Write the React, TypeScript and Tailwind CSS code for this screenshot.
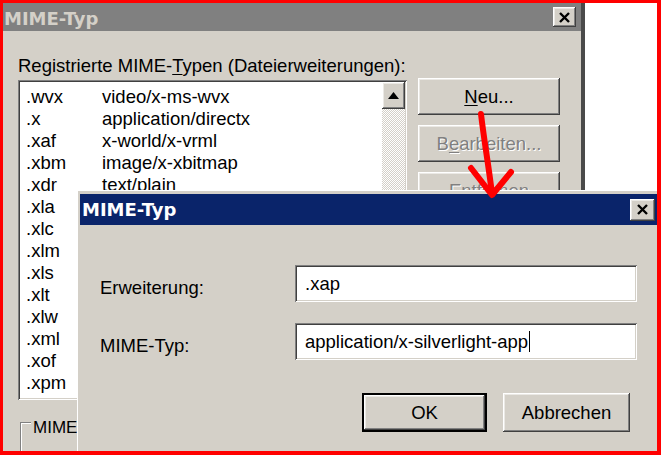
import React from "react";

const raised =
  "shadow-[inset_-1px_-1px_0_#404040,inset_1px_1px_0_#fff,inset_-2px_-2px_0_#808080,inset_2px_2px_0_#ebe9e5]";
const sunken =
  "shadow-[inset_1px_1px_0_#808080,inset_-1px_-1px_0_#fff,inset_2px_2px_0_#404040,inset_-2px_-2px_0_#d4d0c8]";

function XIcon() {
  return (
    <svg width="13" height="11" viewBox="0 0 13 11">
      <path d="M2 1 L11 10 M11 1 L2 10" stroke="#000" strokeWidth="2.4" fill="none" />
    </svg>
  );
}

const rows: [string, string][] = [
  [".wvx", "video/x-ms-wvx"],
  [".x", "application/directx"],
  [".xaf", "x-world/x-vrml"],
  [".xbm", "image/x-xbitmap"],
  [".xdr", "text/plain"],
  [".xla", ""],
  [".xlc", ""],
  [".xlm", ""],
  [".xls", ""],
  [".xlt", ""],
  [".xlw", ""],
  [".xml", ""],
  [".xof", ""],
  [".xpm", ""],
];

export default function App() {
  return (
    <div className="relative w-[661px] h-[455px] overflow-hidden bg-white font-['Liberation_Sans',Arial,sans-serif] text-[18.5px] text-black">
      {/* Background window */}
      <div className="absolute left-0 top-0 w-[585px] h-[455px] flex flex-col bg-[#d4d0c8] border-r-[4px] border-[#4a4a4a]">
        <div className="h-[31px] shrink-0 flex items-start justify-between bg-[#808080] pl-[4px] pr-[5px]">
          <span className="mt-[8px] leading-[21px] font-['DejaVu_Sans',sans-serif] font-bold text-[18px] text-[#d4d0c8]">
            MIME-Typ
          </span>
          <div className={`mt-[7px] w-[23px] h-[20px] flex items-center justify-center bg-[#d4d0c8] ${raised}`}>
            <XIcon />
          </div>
        </div>
        <div className="flex flex-col pl-[18px] pt-[24px]">
          <div className="leading-[22px] whitespace-nowrap">
            Registrierte MIME-<span className="underline underline-offset-2">T</span>ypen (Dateierweiterungen):
          </div>
          <div className="flex items-start mt-[1px]">
            <div className={`mt-[2px] w-[389px] h-[320px] p-[2px] flex bg-white ${sunken}`}>
              <div className="flex-1 overflow-hidden pt-[4px] pl-[6px] leading-[22px]">
                {rows.map(([ext, mime]) => (
                  <div key={ext} className="flex whitespace-nowrap">
                    <span className="w-[76px] shrink-0">{ext}</span>
                    <span>{mime}</span>
                  </div>
                ))}
              </div>
              <div className="w-[23px] flex flex-col">
                <div className={`h-[27px] shrink-0 flex items-center justify-center bg-[#d4d0c8] ${raised}`}>
                  <svg width="11" height="7" viewBox="0 0 11 7">
                    <path d="M5.5 0 L11 7 L0 7 Z" fill="#000" />
                  </svg>
                </div>
                <div className="flex-1 bg-[image:repeating-conic-gradient(#ffffff_0_25%,#d4d0c8_0_50%)] bg-[length:2px_2px]" />
              </div>
            </div>
            <div className="ml-[11px] w-[142px] flex flex-col gap-[10px]">
              <div className={`h-[37px] flex items-center justify-center bg-[#d4d0c8] ${raised}`}>
                <span>
                  <span className="underline underline-offset-2">N</span>eu...
                </span>
              </div>
              <div className={`h-[37px] flex items-center justify-center bg-[#d4d0c8] text-[#808080] [text-shadow:1px_1px_0_#fff] ${raised}`}>
                <span>
                  B<span className="underline underline-offset-2">e</span>arbeiten...
                </span>
              </div>
              <div className={`h-[37px] flex items-center justify-center bg-[#d4d0c8] text-[#808080] [text-shadow:1px_1px_0_#fff] ${raised}`}>
                <span>
                  Ent<span className="underline underline-offset-2">f</span>ernen
                </span>
              </div>
            </div>
          </div>
          <div className="relative ml-[2px] mt-[22px] w-[300px] h-[60px] shadow-[inset_1px_1px_0_#808080,inset_2px_2px_0_#fff]">
            <span className="absolute left-[11px] top-[-4px] px-[2px] bg-[#d4d0c8] text-[17px] leading-[20px] whitespace-nowrap">
              MIME
            </span>
          </div>
        </div>
      </div>

      {/* Front dialog */}
      <div className="absolute left-[77px] top-[190px] w-[585px] h-[280px] flex flex-col bg-[#d4d0c8] pl-[3px] pt-[4px] shadow-[inset_1px_1px_0_#fff]">
        <div className="w-[578px] h-[31px] shrink-0 flex items-center justify-between bg-[#0a246a] pl-[2px] pr-[3px]">
          <span className="leading-[21px] font-['DejaVu_Sans',sans-serif] font-bold text-[18px] text-white">MIME-Typ</span>
          <div className={`w-[25px] h-[22px] flex items-center justify-center bg-[#d4d0c8] ${raised}`}>
            <XIcon />
          </div>
        </div>
        <div className="w-[578px] flex flex-col pt-[40px] pl-[20px]">
          <div className="flex items-center">
            <span className="w-[195px] pt-[9px] leading-[22px]">Erweiterung:</span>
            <div className={`w-[342px] h-[37px] flex items-center pl-[10px] bg-white ${sunken}`}>.xap</div>
          </div>
          <div className="flex items-center mt-[21px]">
            <span className="w-[195px] pt-[9px] leading-[22px]">MIME-Typ:</span>
            <div className={`w-[342px] h-[37px] flex items-center pl-[10px] bg-white ${sunken}`}>
              application/x-silverlight-app
              <span className="inline-block w-[1px] h-[21px] bg-black ml-[1px]" />
            </div>
          </div>
          <div className="flex justify-end gap-[16px] mt-[33px] pr-[28px]">
            <div className="w-[125px] h-[39px] border-2 border-black flex">
              <div className={`flex-1 flex items-center justify-center bg-[#d4d0c8] ${raised}`}>OK</div>
            </div>
            <div className={`w-[127px] h-[39px] flex items-center justify-center bg-[#d4d0c8] ${raised}`}>Abbrechen</div>
          </div>
        </div>
      </div>

      {/* Red arrow annotation */}
      <svg className="absolute left-0 top-0 pointer-events-none" width="661" height="455" viewBox="0 0 661 455">
        <path d="M481 114 C 484 140, 489 168, 492 194" stroke="#f00" strokeWidth="6" fill="none" strokeLinecap="round" />
        <path d="M471 168 L492 195 L511 172" stroke="#f00" strokeWidth="6" fill="none" strokeLinecap="round" strokeLinejoin="round" />
      </svg>

      {/* Red frame */}
      <div className="absolute inset-0 pointer-events-none border-solid border-[#f00] border-t-[3px] border-l-[3px] border-r-[4px] border-b-[4px]" />
    </div>
  );
}
